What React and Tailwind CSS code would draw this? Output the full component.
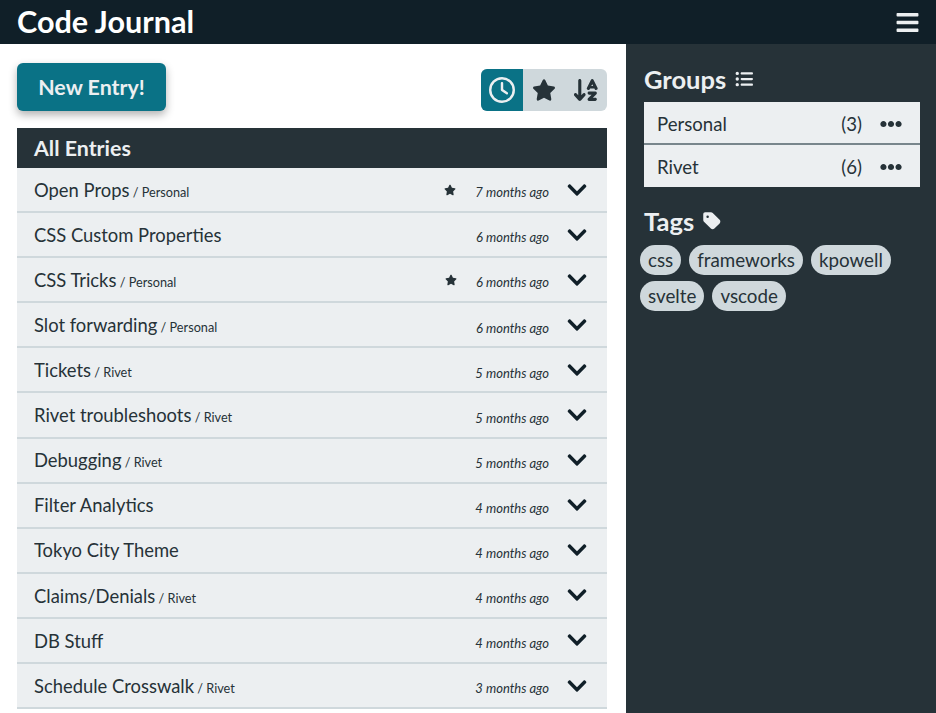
import React from "react";
import { FaArrowDownAZ, FaListUl, FaRegClock, FaStar, FaTag } from "react-icons/fa6";
import { FaBars, FaChevronDown, FaEllipsisH } from "react-icons/fa";

const entries = [
  { title: "Open Props", group: "Personal", starred: true, age: "7 months ago" },
  { title: "CSS Custom Properties", age: "6 months ago" },
  { title: "CSS Tricks", group: "Personal", starred: true, age: "6 months ago" },
  { title: "Slot forwarding", group: "Personal", age: "6 months ago" },
  { title: "Tickets", group: "Rivet", age: "5 months ago" },
  { title: "Rivet troubleshoots", group: "Rivet", age: "5 months ago" },
  { title: "Debugging", group: "Rivet", age: "5 months ago" },
  { title: "Filter Analytics", age: "4 months ago" },
  { title: "Tokyo City Theme", age: "4 months ago" },
  { title: "Claims/Denials", group: "Rivet", age: "4 months ago" },
  { title: "DB Stuff", age: "4 months ago" },
  { title: "Schedule Crosswalk", group: "Rivet", age: "3 months ago" },
];

const groups = [
  { name: "Personal", count: 3 },
  { name: "Rivet", count: 6 },
];

const tags = ["css", "frameworks", "kpowell", "svelte", "vscode"];

function EntryRow({ entry }) {
  return (
    <div className="flex h-[45.1px] items-center border-b-2 border-[#cfd8dc] bg-[#eceff1] pl-[17px] pr-[19px] text-[#263238]">
      <div className="flex-1 truncate pt-[2px]">
        <span className="text-[18.4px]">{entry.title}</span>
        {entry.group && <span className="text-[12.7px]"> / {entry.group}</span>}
      </div>
      {entry.starred && <FaStar className="mr-[19px] text-[12px]" />}
      <span className="mr-[17px] mt-[7px] text-[13px] italic">{entry.age}</span>
      <FaChevronDown className="text-[22px] text-[#101f28]" />
    </div>
  );
}

export default function App() {
  return (
    <div
      className="flex h-[713px] flex-col overflow-hidden bg-white"
      style={{ fontFamily: "Lato, sans-serif" }}
    >
      {/* header */}
      <header className="flex h-[44px] shrink-0 items-center justify-between bg-[#101f28] pl-[17px] pr-[16px] text-white">
        <h1 className="text-[30.6px] font-bold leading-none">Code Journal</h1>
        <FaBars className="text-[25px] text-[#eceff1]" />
      </header>

      <div className="flex min-h-0 flex-1">
        {/* entries */}
        <main className="min-w-0 flex-1 pl-[17px] pr-[19px] pt-[19px]">
          <div className="mb-[17px] flex items-start justify-between">
            <button className="h-[48px] w-[149px] rounded-md bg-[#0a7286] text-[21.4px] font-bold text-[#eceff1] shadow-[0_4px_8px_rgba(0,0,0,0.3)]">
              New Entry!
            </button>
            <div className="mt-[6px] flex h-[42px] w-[126px] overflow-hidden rounded-md bg-[#cfd8dc] text-[#263238]">
              <div className="flex w-[42px] items-center justify-center bg-[#0a7286] text-[#eceff1]">
                <FaRegClock className="text-[26px]" />
              </div>
              <div className="flex w-[42px] items-center justify-center">
                <FaStar className="text-[24px]" />
              </div>
              <div className="flex w-[42px] items-center justify-center">
                <FaArrowDownAZ className="text-[28px]" />
              </div>
            </div>
          </div>
          <div className="flex h-[40px] items-center bg-[#263238] pl-[17px] text-[21.4px] font-bold text-[#eceff1]">
            All Entries
          </div>
          {entries.map((entry) => (
            <EntryRow key={entry.title} entry={entry} />
          ))}
        </main>

        {/* sidebar */}
        <aside className="w-[310px] shrink-0 bg-[#263238] px-[14px] pt-[18px]">
          <h2 className="flex h-[34px] items-center gap-[9px] pl-[4px] text-[25.5px] font-bold text-[#eceff1]">
            Groups <FaListUl className="text-[18px]" />
          </h2>
          <div className="mt-[6px] ml-[4px] mr-[2px]">
            {groups.map((group, i) => (
              <div
                key={group.name}
                className={`flex items-center bg-[#eceff1] pl-[13px] pr-[18px] pt-[4px] text-[18.6px] text-[#263238] ${
                  i === 0 ? "h-[43px] border-b-2 border-[#78868c]" : "h-[42px]"
                }`}
              >
                <span className="flex-1">{group.name}</span>
                <span className="mr-[18px]">({group.count})</span>
                <FaEllipsisH className="mb-[2px] text-[22px]" />
              </div>
            ))}
          </div>
          <h2 className="mt-[17px] flex h-[34px] items-center gap-[8px] pl-[4px] text-[25.5px] font-bold text-[#eceff1]">
            Tags <FaTag className="text-[20px]" />
          </h2>
          <div className="mt-[7px] flex flex-wrap gap-x-[8px] gap-y-[6px]">
            {tags.map((tag) => (
              <span
                key={tag}
                className="flex h-[30px] items-center rounded-full bg-[#cfd8dc] px-[8px] pt-[1px] text-[18.8px] text-[#263238]"
              >
                {tag}
              </span>
            ))}
          </div>
        </aside>
      </div>
    </div>
  );
}
